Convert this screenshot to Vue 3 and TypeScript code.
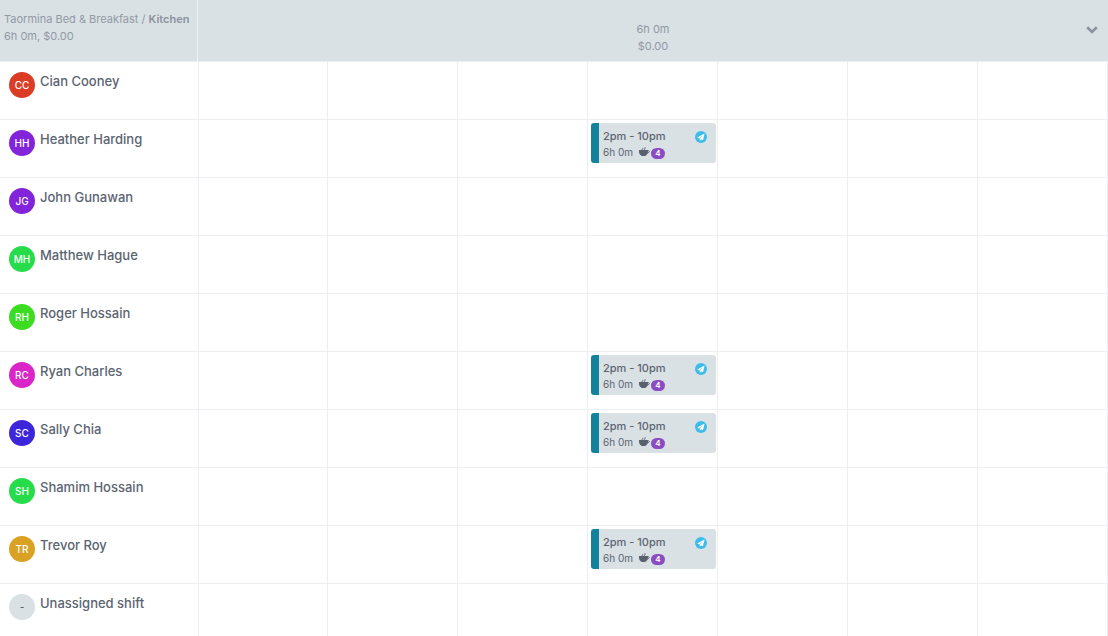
<script setup lang="ts">
interface Shift {
  day: number
  time: string
  hours: string
  breaks: number
}

interface Person {
  name: string
  initials: string
  tone: string
  shift?: Shift
}

const days = [0, 1, 2, 3, 4, 5, 6]
const evening: Shift = { day: 3, time: '2pm - 10pm', hours: '6h 0m', breaks: 4 }

const people: Person[] = [
  { name: 'Cian Cooney', initials: 'CC', tone: 'red' },
  { name: 'Heather Harding', initials: 'HH', tone: 'violet', shift: evening },
  { name: 'John Gunawan', initials: 'JG', tone: 'violet' },
  { name: 'Matthew Hague', initials: 'MH', tone: 'green' },
  { name: 'Roger Hossain', initials: 'RH', tone: 'lime' },
  { name: 'Ryan Charles', initials: 'RC', tone: 'pink', shift: evening },
  { name: 'Sally Chia', initials: 'SC', tone: 'blue', shift: evening },
  { name: 'Shamim Hossain', initials: 'SH', tone: 'green' },
  { name: 'Trevor Roy', initials: 'TR', tone: 'gold', shift: evening },
  { name: 'Unassigned shift', initials: '-', tone: 'none' },
]
</script>

<template>
  <table class="roster">
    <colgroup>
      <col class="name-col" />
      <col v-for="d in days" :key="d" />
    </colgroup>
    <thead>
      <tr>
        <th class="area" scope="col">
          <div>Taormina Bed &amp; Breakfast / <strong>Kitchen</strong></div>
          <div>6h 0m, $0.00</div>
        </th>
        <th class="totals" colspan="7" scope="colgroup">
          <div class="totals-row">
            <div class="totals-text">
              <div>6h 0m</div>
              <div>$0.00</div>
            </div>
            <button class="toggle" type="button" aria-label="Collapse area">
              <svg width="12" height="8" viewBox="0 0 12 8">
                <path d="M1.200 1.300 6 6l4.800-4.700" fill="none" stroke="#8b929e" stroke-width="2.600" />
              </svg>
            </button>
          </div>
        </th>
      </tr>
    </thead>
    <tbody>
      <tr v-for="p in people" :key="p.name">
        <th class="person" scope="row">
          <div class="person-row">
            <span class="avatar" :class="p.tone">{{ p.initials }}</span>
            <span class="name">{{ p.name }}</span>
          </div>
        </th>
        <td v-for="d in days" :key="d">
          <button v-if="p.shift && p.shift.day === d" class="shift" type="button">
            <span class="line">
              <span class="time">{{ p.shift.time }}</span>
              <svg class="sent" width="12" height="12" viewBox="0 0 12 12">
                <circle cx="6" cy="6" r="6" fill="#3bbdec" />
                <path d="M9.600 2.500 2.200 6.500l1.900.9 3.700-3.200-3 3.600v1.900l1.200-1.300 2 .9z" fill="#fff" />
              </svg>
            </span>
            <span class="line meta">
              <span>{{ p.shift.hours }}</span>
              <svg class="cup" width="11" height="10" viewBox="0 0 11 10">
                <path d="M0 3h9c.2 2.700-.5 4.400-2 5.500-1 .7-4 .7-5 0C.5 7.400-.2 5.700 0 3z" fill="#58616d" />
                <path d="M8.500 3.600c2.300-.4 2.300 2.300-.4 2.300" fill="none" stroke="#58616d" />
                <path d="M3.300 3c-.7-1 1-.9.4-2M5.600 3c-.7-1 1-1.300.4-2.700" fill="none" stroke="#58616d" />
              </svg>
              <span class="count">{{ p.shift.breaks }}</span>
            </span>
          </button>
        </td>
      </tr>
    </tbody>
  </table>
</template>

<style>
html {
  scrollbar-width: none;
}
</style>

<style scoped>
.roster {
  width: 100%;
  table-layout: fixed;
  border-collapse: separate;
  border-spacing: 0;
  background: #fff;
  color: #5b6471;
  font-family: Inter, "Liberation Sans", sans-serif;
}
.name-col {
  width: 198px;
}
th,
td {
  box-sizing: border-box;
  padding: 0;
  text-align: left;
  vertical-align: top;
  font-weight: 400;
}
thead th {
  height: 62px;
  border-bottom: 1px solid #ebeef2;
  background: #d9e1e4;
  color: #9299a4;
  font-size: 11px;
  line-height: 17px;
  white-space: nowrap;
}
thead .area {
  padding: 11px 0 0 4px;
  border-right: 1px solid #f0f3f5;
}
.area strong {
  font-weight: 600;
  color: #8b929e;
}
.totals-row {
  display: flex;
  align-items: flex-start;
  padding: 21px 10px 0 10px;
}
.totals-text {
  flex: 1;
  padding-left: 12px;
  text-align: center;
}
.toggle {
  display: flex;
  margin-top: 5px;
  padding: 0;
  border: 0;
  background: none;
}
tbody th,
tbody td {
  height: 58px;
  border-bottom: 1px solid #ebeef2;
}
tbody td {
  border-right: 1px solid #ebeef2;
}
tbody td:nth-child(2) {
  border-left: 1px solid #ebeef2;
}
.person-row {
  display: flex;
  align-items: flex-start;
  gap: 5px;
  padding: 10px 0 0 9px;
}
.avatar {
  width: 26px;
  border-radius: 50%;
  color: #fff;
  font-size: 10px;
  font-weight: 500;
  line-height: 26px;
  text-align: center;
}
.red { background: #da3c25; }
.violet { background: #8224d9; }
.green { background: #27dc4b; }
.lime { background: #3cdc22; }
.pink { background: #da26c6; }
.blue { background: #3d25da; }
.gold { background: #daa225; }
.none { background: #d9e1e4; color: #5b6471; }
.name {
  font-size: 13px;
  font-weight: 500;
  line-height: 19px;
  white-space: nowrap;
}
.shift {
  display: block;
  box-sizing: border-box;
  width: calc(100% - 4px);
  height: 40px;
  margin: 3px 1px 0 3px;
  padding: 5px 9px 3px 4px;
  border: 0;
  border-left: 8px solid #14829a;
  border-radius: 3px;
  background: #d9e1e4;
  color: #5b6471;
  font-family: inherit;
  text-align: left;
}
.line {
  display: flex;
  align-items: center;
  height: 16px;
  font-size: 11px;
  font-weight: 500;
  line-height: 16px;
  white-space: nowrap;
}
.sent {
  margin: 2px 0 0 auto;
}
.meta {
  font-size: 10px;
  font-weight: 400;
}
.cup {
  margin-left: 6px;
}
.count {
  width: 14px;
  margin-top: 2px;
  margin-left: 1px;
  border-radius: 6px;
  background: #8a4cc0;
  color: #fff;
  font-size: 8px;
  font-weight: 600;
  line-height: 11px;
  text-align: center;
}
</style>
